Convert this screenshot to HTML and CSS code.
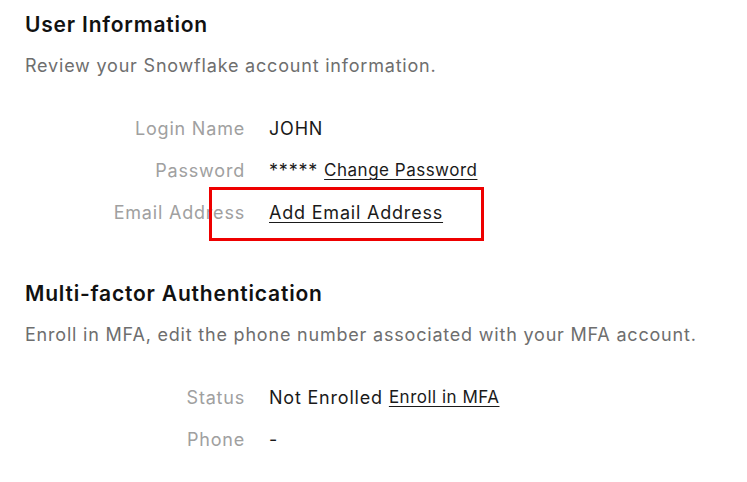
FILE: index.html
```html
<!DOCTYPE html>
<html>
<head>
<meta charset="utf-8">
<link rel="stylesheet" href="styles.css">
</head>
<body>
<section class="section">
  <h2 class="title">User Information</h2>
  <p class="desc">Review your Snowflake account information.</p>
  <div class="fields">
    <div class="label">Login Name</div>
    <div class="value">JOHN</div>
    <div class="label">Password</div>
    <div class="value">***** <a class="link small" href="#">Change Password</a></div>
    <div class="label">Email Address</div>
    <div class="value highlighted"><a class="link" href="#">Add Email Address</a></div>
  </div>
</section>
<section class="section second">
  <h2 class="title">Multi-factor Authentication</h2>
  <p class="desc">Enroll in MFA, edit the phone number associated with your MFA account.</p>
  <div class="fields">
    <div class="label">Status</div>
    <div class="value">Not Enrolled <a class="link small" href="#">Enroll in MFA</a></div>
    <div class="label">Phone</div>
    <div class="value">-</div>
  </div>
</section>
</body>
</html>
```
FILE: styles.css
```css
html, body {
  margin: 0;
  padding: 0;
  background: #ffffff;
}
body {
  font-family: Inter, "Noto Sans", sans-serif;
  color: #1a1a1a;
  padding: 10px 25px 0 25px;
}
.section {
  display: flex;
  flex-direction: column;
}
.second {
  margin-top: 46px;
}
.title {
  margin: 0;
  font-size: 21px;
  font-weight: 600;
  letter-spacing: 0.8px;
  line-height: 30px;
  color: #111;
}
.desc {
  margin: 13px 0 0 0;
  font-size: 18px;
  letter-spacing: 0.8px;
  line-height: 26px;
  color: #6e6e6e;
}
.fields {
  display: grid;
  grid-template-columns: 220px auto;
  column-gap: 24px;
  margin-top: 28px;
  grid-auto-rows: 42px;
  align-items: center;
  font-size: 18px;
  letter-spacing: 0.8px;
}
.label {
  text-align: right;
  color: #a0a0a0;
}
.value {
  color: #1a1a1a;
  display: flex;
  align-items: center;
  height: 100%;
  gap: 6px;
}
.link {
  color: #1a1a1a;
  text-decoration: underline;
  text-decoration-thickness: 1px;
  text-underline-offset: 3px;
}
.link.small {
  font-size: 17px;
  letter-spacing: 0.5px;
}
.highlighted {
  position: relative;
}
.highlighted::after {
  content: "";
  position: absolute;
  left: -60px;
  top: -4px;
  width: 275px;
  height: 54px;
  box-sizing: border-box;
  border: 3px solid #ee0000;
  pointer-events: none;
}
```
